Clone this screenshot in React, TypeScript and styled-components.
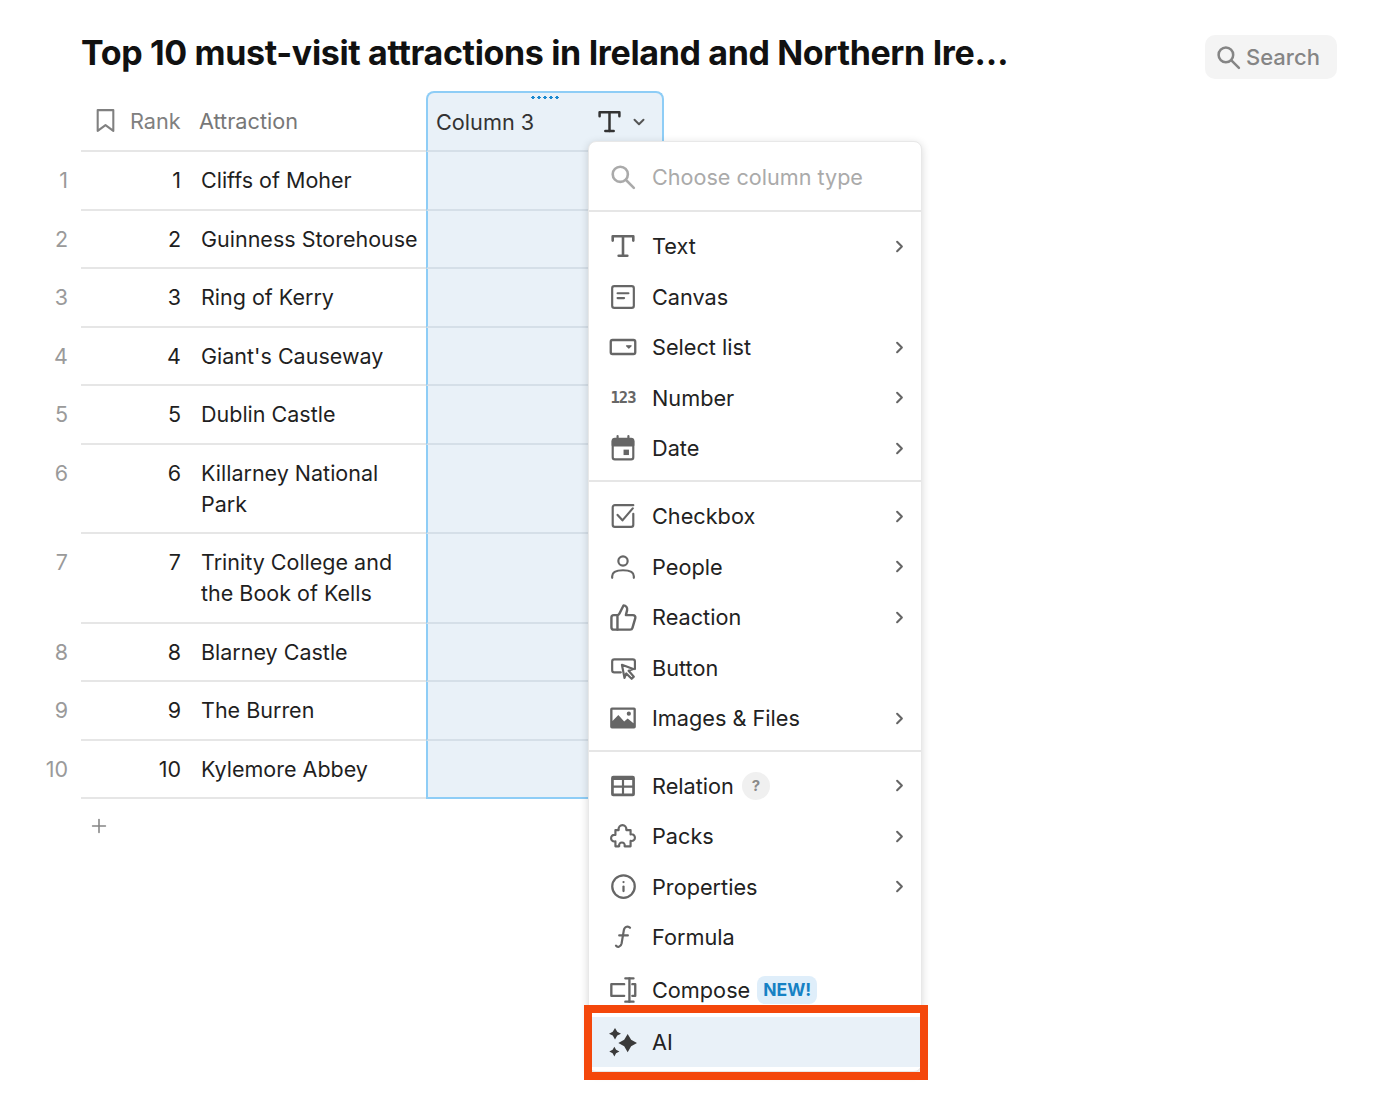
import { ReactNode } from 'react'
import styled, { createGlobalStyle } from 'styled-components'
import { ChevronDown, ChevronRight, Info, Plus, ThumbsUp } from 'lucide-react'

const GlobalStyle = createGlobalStyle`
  html, body {
    margin: 0;
    padding: 0;
    background: #fff;
    font-family: Inter, "Liberation Sans", sans-serif;
    color: #1f1f1f;
  }
  * { box-sizing: border-box; }
`

const Page = styled.div`
  width: 1400px;
  height: 1105px;
  overflow: hidden;
  padding: 35px 63px 0 0;
`

const TitleBar = styled.header`
  display: flex;
  justify-content: space-between;
  align-items: center;
  height: 44px;
  padding-left: 81px;
  margin-bottom: 12px;
`

const Title = styled.h1`
  margin: 0 0 10px;
  font-size: 34px;
  font-weight: 700;
  letter-spacing: -0.35px;
  color: #111;
  white-space: nowrap;
`

const SearchPill = styled.div`
  display: flex;
  align-items: center;
  gap: 5px;
  width: 132px;
  height: 44px;
  padding-left: 11px;
  border-radius: 10px;
  background: #f4f4f4;
  color: #858585;
  font-size: 22px;
  font-weight: 500;
`

const Row = styled.div`
  display: grid;
  grid-template-columns: 81px 110px 235px 238px;
`

const Gutter = styled.div`
  padding: 13px 13px 0 0;
  text-align: right;
  font-size: 21.5px;
  line-height: 31px;
  color: #9a9a9a;
`

const Cell = styled.div<{ $right?: boolean; $inset?: number }>`
  min-height: 58.5px;
  padding: 13px 0 12.5px ${(p) => p.$inset ?? 0}px;
  padding-right: ${(p) => (p.$right ? 10 : 0)}px;
  border-bottom: 2px solid #e6e6e6;
  text-align: ${(p) => (p.$right ? 'right' : 'left')};
  font-size: 21.5px;
  line-height: 31px;
`

const HeadCell = styled.div`
  display: flex;
  align-items: center;
  height: 61px;
  border-bottom: 2px solid #e6e6e6;
  font-size: 21.7px;
  color: #777;
`

const RankHead = styled(HeadCell)`
  padding-left: 12px;
  gap: 12px;
  color: #808080;
`

const AttractionHead = styled(HeadCell)`
  padding-left: 8px;
`

const ActiveHead = styled.div`
  position: relative;
  display: flex;
  align-items: center;
  justify-content: space-between;
  height: 61px;
  padding: 0 14px 0 8px;
  background: #e9f1f8;
  border: 2px solid #8ecdf6;
  border-bottom: 2px solid #d5dfe8;
  border-radius: 8px 8px 0 0;
  font-size: 21.7px;
  color: #333;
`

const DragDots = styled.span`
  position: absolute;
  top: 3px;
  left: 102px;
  width: 30px;
  height: 3px;
  background-image: radial-gradient(circle, #1a88d0 1.5px, transparent 1.7px);
  background-size: 6px 3px;
`

const HeadActions = styled.span`
  display: flex;
  align-items: center;
  gap: 8px;
`

const ActiveCell = styled.div<{ $last?: boolean }>`
  background: #e9f1f8;
  border-left: 2px solid #8ecdf6;
  border-bottom: 2px solid ${(p) => (p.$last ? '#8ecdf6' : '#d5dfe8')};
`

const AddRow = styled.div`
  padding: 16px 0 0 88px;
  color: #858585;
  line-height: 0;
`

const Menu = styled.div`
  position: absolute;
  top: 48px;
  left: 160px;
  z-index: 2;
  width: 334px;
  height: 931px;
  background: #fff;
  border: 1px solid #e8e8e8;
  border-radius: 8px;
  box-shadow: 0 2px 8px rgba(0, 0, 0, 0.16);
`

const MenuSearch = styled.div`
  display: flex;
  align-items: center;
  height: 70px;
  padding: 2px 0 0 21px;
  gap: 16px;
  border-bottom: 2px solid #e6e6e6;
  font-size: 21.6px;
  color: #aaa;
`

const MenuSection = styled.div<{ $last?: boolean }>`
  padding: ${(p) => (p.$last ? '8.5px 0 0' : '9px 0 6.5px')};
  border-bottom: ${(p) => (p.$last ? 'none' : '2px solid #e6e6e6')};
`

const MenuRow = styled.div<{ $height?: number }>`
  display: flex;
  align-items: center;
  height: ${(p) => p.$height ?? 50.5}px;
  padding-left: 18px;
  font-size: 21.7px;
  color: #222;
`

const IconSlot = styled.span`
  display: flex;
  justify-content: center;
  align-items: center;
  width: 32px;
  margin-right: 13px;
  color: #666;
`

const NumberGlyph = styled.span`
  font-family: "DejaVu Sans Mono", monospace;
  font-size: 15.5px;
  font-weight: 700;
  letter-spacing: -1px;
  color: #666;
`

const RowArrow = styled.span`
  display: flex;
  margin-left: auto;
  margin-right: 12px;
  color: #666;
`

const HelpBadge = styled.span`
  display: flex;
  align-items: center;
  justify-content: center;
  width: 28px;
  height: 28px;
  margin-left: 8px;
  border-radius: 50%;
  background: #f0f0f0;
  color: #8a8a8a;
  font-size: 15px;
  font-weight: 700;
`

const NewBadge = styled.span`
  margin-left: 7px;
  padding: 2px 6px;
  border-radius: 8px;
  background: #dfeefa;
  color: #1681c4;
  font-size: 17.5px;
  line-height: 24px;
  font-weight: 700;
`

const AiRow = styled(MenuRow)`
  position: relative;
  margin: 0 1px 0 3px;
  padding-left: 15px;
  background: #e9f1f8;
`

const Callout = styled.span`
  position: absolute;
  top: -12px;
  bottom: -13px;
  left: -8px;
  right: -8px;
  border: 8px solid #f4470b;
  pointer-events: none;
`

const Glyph = ({ children, size = 26, weight = 2 }: { children: ReactNode; size?: number; weight?: number }) => (
  <svg width={size} height={size} viewBox="0 0 24 24" fill="none" stroke="currentColor" strokeWidth={weight} strokeLinecap="round" strokeLinejoin="round">
    {children}
  </svg>
)

const SearchIcon = ({ size = 26 }: { size?: number }) => (
  <Glyph size={size} weight={2.4}>
    <circle cx="9.500" cy="9.500" r="7" />
    <path d="M15 15l7 7" />
  </Glyph>
)

const BookmarkIcon = () => (
  <Glyph size={25} weight={2}>
    <path d="M4.500 2h15v20L12 16.500 4.500 22z" />
  </Glyph>
)

const TextIcon = ({ size = 26 }: { size?: number }) => (
  <Glyph size={size} weight={2.400}>
    <path d="M2.500 7V3h19v4" />
    <path d="M12 3v18" />
    <path d="M8 21h8" />
  </Glyph>
)

const CanvasIcon = () => (
  <Glyph>
    <rect x="2" y="2" width="20" height="20" rx="2" />
    <path d="M7 8.500h10M7 13h6" />
  </Glyph>
)

const SelectIcon = () => (
  <Glyph size={28}>
    <rect x="1.500" y="6" width="21" height="12" rx="1.500" />
    <path d="M15 11h4l-2 2z" fill="currentColor" strokeWidth="1" />
  </Glyph>
)

const DateIcon = () => (
  <Glyph>
    <rect x="2.500" y="3.500" width="19" height="19" rx="2" />
    <path d="M2.500 5.500h19v4h-19z" fill="currentColor" />
    <path d="M7 1v3M17 1v3" />
    <rect x="12.500" y="13.500" width="5" height="5" fill="currentColor" stroke="none" />
  </Glyph>
)

const CheckboxIcon = () => (
  <Glyph>
    <path d="M21.500 10v10a2 2 0 0 1-2 2h-15a2 2 0 0 1-2-2V4a2 2 0 0 1 2-2h17" />
    <path d="M7 11l4.500 5L21 5" />
  </Glyph>
)

const PeopleIcon = () => (
  <Glyph>
    <circle cx="12" cy="6.500" r="4.300" />
    <path d="M2 22v-1.500C2 17 6 15 12 15s10 2 10 5.500V22" />
  </Glyph>
)

const ButtonIcon = () => (
  <Glyph>
    <path d="M10 16H4a2 2 0 0 1-2-2V6a2 2 0 0 1 2-2h17a2 2 0 0 1 2 2v7" />
    <path d="M11 9l10.500 4-4.300 1.600L22 20l-2 2-5-5-1.600 4.200z" />
  </Glyph>
)

const ImagesIcon = () => (
  <svg width="28" height="28" viewBox="0 0 24 24" fill="#666">
    <path fillRule="evenodd" d="M2.500 3h19A1.500 1.500 0 0 1 23 4.500v15a1.500 1.500 0 0 1-1.500 1.500h-19A1.500 1.500 0 0 1 1 19.500v-15A1.500 1.500 0 0 1 2.500 3zM3 5v9.500l5-5 5 5.500 3-2.500 5 4V5zm14 1.500a1.800 1.800 0 1 1 0 3.600 1.800 1.800 0 0 1 0-3.600z" />
  </svg>
)

const RelationIcon = () => (
  <svg width="26" height="26" viewBox="0 0 24 24" fill="#666">
    <path fillRule="evenodd" d="M3 2.500h18a2 2 0 0 1 2 2v15a2 2 0 0 1-2 2H3a2 2 0 0 1-2-2v-15a2 2 0 0 1 2-2zM3.500 6.500v5H11v-5zm9.500 0v5h7.500v-5zM3.500 13.500V19H11v-5.500zm9.500 0V19h7.500v-5.500z" />
  </svg>
)

const PacksIcon = () => (
  <Glyph>
    <path d="M8 6.500C7.500 3.500 9.500 2 11.500 2s4 1.500 3.500 4.500h4v4c3-.5 4 1.500 4 3s-1 3.500-4 3v5h-5.500c.5-2.500-1-3.500-2.500-3.500s-3 1-2.500 3.500H5V17c-3 .5-4-1.500-4-3s1-3.500 4-3V6.500z" />
  </Glyph>
)

const FormulaIcon = () => (
  <Glyph>
    <path d="M18.500 3.500c-1.500-1.800-5-1.500-5.700 2L10.700 18c-.7 3.500-4 3.800-5.200 2" />
    <path d="M8.500 10.500h8" />
  </Glyph>
)

const ComposeIcon = () => (
  <Glyph size={28}>
    <path d="M13 7H2v10h11" />
    <path d="M14 2h7M14 22h7" />
    <path d="M17.500 2v20" />
    <path d="M20 7h2.500v10H20" />
  </Glyph>
)

const AiIcon = () => (
  <svg width="34" height="34" viewBox="0 0 24 24" fill="#3a3a3a">
    <path d="M15.500 6l2.600 4.400 4.400 2.400-4.400 2.400-2.600 4.400-2.600-4.400-4.400-2.400 4.400-2.400z" />
    <path d="M6 1.500l1.700 2.900 2.800 1.400-2.800 1.400L6 10.100 4.300 7.200 1.500 5.800l2.800-1.400z" />
    <path d="M5.500 15.500l1.300 2.400 2.500 1.300-2.500 1.300-1.300 2.400-1.300-2.400-2.500-1.300 2.500-1.300z" />
  </svg>
)

type MenuItem = { label: string; icon: ReactNode; arrow?: boolean; badge?: ReactNode; height?: number }

const sections: MenuItem[][] = [
  [
    { label: 'Text', icon: <TextIcon />, arrow: true },
    { label: 'Canvas', icon: <CanvasIcon /> },
    { label: 'Select list', icon: <SelectIcon />, arrow: true },
    { label: 'Number', icon: <NumberGlyph>123</NumberGlyph>, arrow: true },
    { label: 'Date', icon: <DateIcon />, arrow: true },
  ],
  [
    { label: 'Checkbox', icon: <CheckboxIcon />, arrow: true },
    { label: 'People', icon: <PeopleIcon />, arrow: true },
    { label: 'Reaction', icon: <ThumbsUp size={29} strokeWidth={2} />, arrow: true },
    { label: 'Button', icon: <ButtonIcon /> },
    { label: 'Images & Files', icon: <ImagesIcon />, arrow: true },
  ],
]

const lastSection: MenuItem[] = [
  { label: 'Relation', icon: <RelationIcon />, arrow: true, badge: <HelpBadge>?</HelpBadge> },
  { label: 'Packs', icon: <PacksIcon />, arrow: true },
  { label: 'Properties', icon: <Info size={27} strokeWidth={2} />, arrow: true },
  { label: 'Formula', icon: <FormulaIcon /> },
  { label: 'Compose', icon: <ComposeIcon />, badge: <NewBadge>NEW!</NewBadge>, height: 54 },
]

const rows = [
  'Cliffs of Moher',
  'Guinness Storehouse',
  'Ring of Kerry',
  "Giant's Causeway",
  'Dublin Castle',
  'Killarney National Park',
  'Trinity College and the Book of Kells',
  'Blarney Castle',
  'The Burren',
  'Kylemore Abbey',
]

const MenuEntry = ({ item }: { item: MenuItem }) => (
  <MenuRow $height={item.height}>
    <IconSlot>{item.icon}</IconSlot>
    {item.label}
    {item.badge}
    {item.arrow && (
      <RowArrow>
        <ChevronRight size={19} strokeWidth={2.6} />
      </RowArrow>
    )}
  </MenuRow>
)

export default function App() {
  return (
    <Page>
      <GlobalStyle />
      <TitleBar>
        <Title>Top 10 must-visit attractions in Ireland and Northern Ire…</Title>
        <SearchPill>
          <SearchIcon size={25} />
          Search
        </SearchPill>
      </TitleBar>

      <Row>
        <div />
        <RankHead>
          <BookmarkIcon />
          Rank
        </RankHead>
        <AttractionHead>Attraction</AttractionHead>
        <ActiveHead>
          Column 3
          <DragDots />
          <HeadActions>
            <TextIcon size={25} />
            <ChevronDown size={18} strokeWidth={2.6} color="#555" />
          </HeadActions>
          <Menu>
            <MenuSearch>
              <SearchIcon />
              Choose column type
            </MenuSearch>
            {sections.map((section) => (
              <MenuSection key={section[0].label}>
                {section.map((item) => (
                  <MenuEntry key={item.label} item={item} />
                ))}
              </MenuSection>
            ))}
            <MenuSection $last>
              {lastSection.map((item) => (
                <MenuEntry key={item.label} item={item} />
              ))}
            </MenuSection>
            <AiRow>
              <IconSlot>
                <AiIcon />
              </IconSlot>
              AI
              <Callout />
            </AiRow>
          </Menu>
        </ActiveHead>
      </Row>

      {rows.map((name, i) => (
        <Row key={name}>
          <Gutter>{i + 1}</Gutter>
          <Cell $right>{i + 1}</Cell>
          <Cell $inset={10}>{name}</Cell>
          <ActiveCell $last={i === rows.length - 1} />
        </Row>
      ))}

      <AddRow>
        <Plus size={22} strokeWidth={1.7} />
      </AddRow>
    </Page>
  )
}
